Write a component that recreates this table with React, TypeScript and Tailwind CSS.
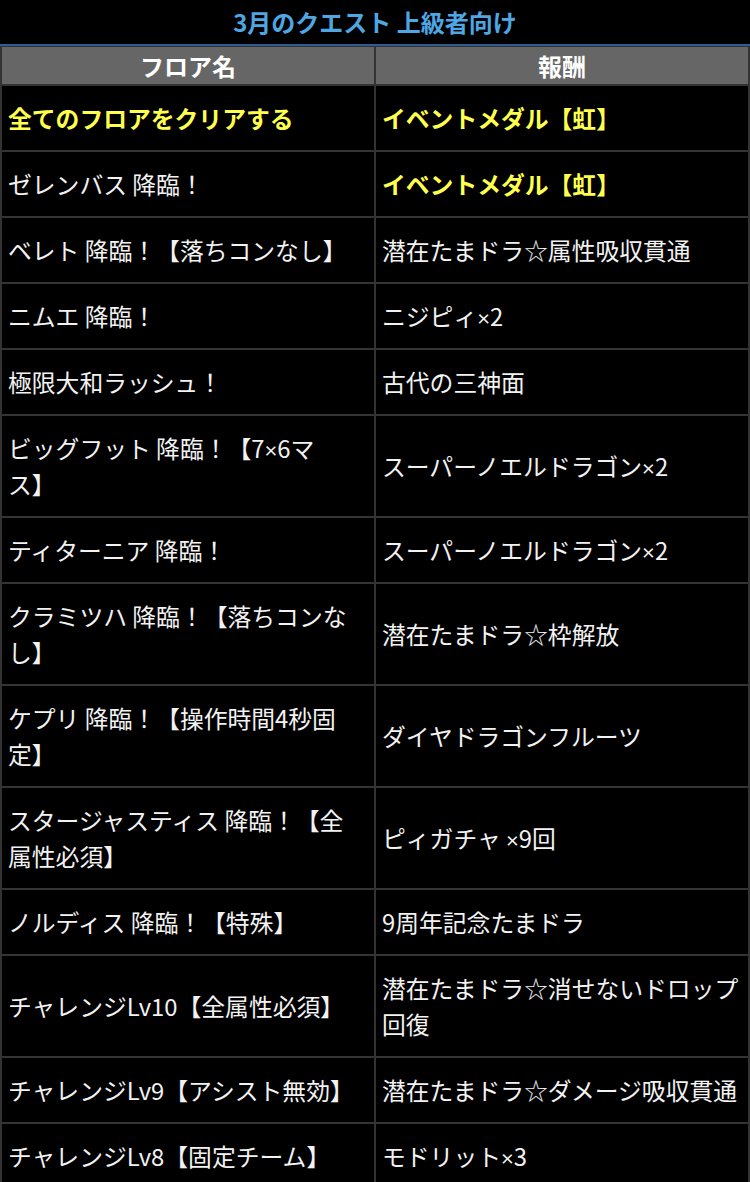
import React from "react";

type Row = {
  floor: string[];
  reward: string[];
  floorHi?: boolean;
  rewardHi?: boolean;
};

// lines are split where the original table wraps
const rows: Row[] = [
  { floor: ["全てのフロアをクリアする"], reward: ["イベントメダル【虹】"], floorHi: true, rewardHi: true },
  { floor: ["ゼレンバス 降臨！"], reward: ["イベントメダル【虹】"], rewardHi: true },
  { floor: ["ベレト 降臨！【落ちコンなし】"], reward: ["潜在たまドラ☆属性吸収貫通"] },
  { floor: ["ニムエ 降臨！"], reward: ["ニジピィ×2"] },
  { floor: ["極限大和ラッシュ！"], reward: ["古代の三神面"] },
  { floor: ["ビッグフット 降臨！【7×6マ", "ス】"], reward: ["スーパーノエルドラゴン×2"] },
  { floor: ["ティターニア 降臨！"], reward: ["スーパーノエルドラゴン×2"] },
  { floor: ["クラミツハ 降臨！【落ちコンな", "し】"], reward: ["潜在たまドラ☆枠解放"] },
  { floor: ["ケプリ 降臨！【操作時間4秒固", "定】"], reward: ["ダイヤドラゴンフルーツ"] },
  { floor: ["スタージャスティス 降臨！【全", "属性必須】"], reward: ["ピィガチャ ×9回"] },
  { floor: ["ノルディス 降臨！【特殊】"], reward: ["9周年記念たまドラ"] },
  { floor: ["チャレンジLv10【全属性必須】"], reward: ["潜在たまドラ☆消せないドロップ", "回復"] },
  { floor: ["チャレンジLv9【アシスト無効】"], reward: ["潜在たまドラ☆ダメージ吸収貫通"] },
  { floor: ["チャレンジLv8【固定チーム】"], reward: ["モドリット×3"] },
];

function Line({ text }: { text: string }) {
  const parts = text.split("×");
  return (
    <div className="whitespace-nowrap h-[36px]">
      {parts.map((p, i) => (
        <React.Fragment key={i}>
          {i > 0 && <span className="font-['Lato'] text-[22px] leading-[0]">×</span>}
          {p}
        </React.Fragment>
      ))}
    </div>
  );
}

function Cell({ lines, hi }: { lines: string[]; hi?: boolean }) {
  return (
    <div className="bg-black flex items-center px-[6px] py-[14px] overflow-hidden">
      <div
        className={
          hi
            ? "text-[23.8px] leading-[36px] font-bold text-[#ffff4d]"
            : "text-[23.8px] leading-[36px] text-[#f2f2f2]"
        }
      >
        {lines.map((l, i) => (
          <Line key={i} text={l} />
        ))}
      </div>
    </div>
  );
}

export default function App() {
  return (
    <div
      className="w-[750px] h-[1182px] overflow-hidden bg-black"
      style={{ fontFamily: '"Noto Sans CJK JP", "Noto Sans", sans-serif' }}
    >
      {/* Title */}
      <div className="h-[44px] flex items-center justify-center">
        <h2 className="text-[24px] font-bold text-[#4ea6e3]">
          3月のクエスト 上級者向け
        </h2>
      </div>
      <div className="h-[2px] bg-[#2c5c92]" />

      {/* Table */}
      <div className="grid grid-cols-2 gap-[2px] bg-[#333333] px-[2px] pt-[1px]">
        <div className="h-[37px] bg-[#666666] flex items-center justify-center text-[24px] font-bold text-white">
          フロア名
        </div>
        <div className="h-[37px] bg-[#666666] flex items-center justify-center text-[24px] font-bold text-white">
          報酬
        </div>
        {rows.map((r, i) => (
          <React.Fragment key={i}>
            <Cell lines={r.floor} hi={r.floorHi} />
            <Cell lines={r.reward} hi={r.rewardHi} />
          </React.Fragment>
        ))}
      </div>
    </div>
  );
}
